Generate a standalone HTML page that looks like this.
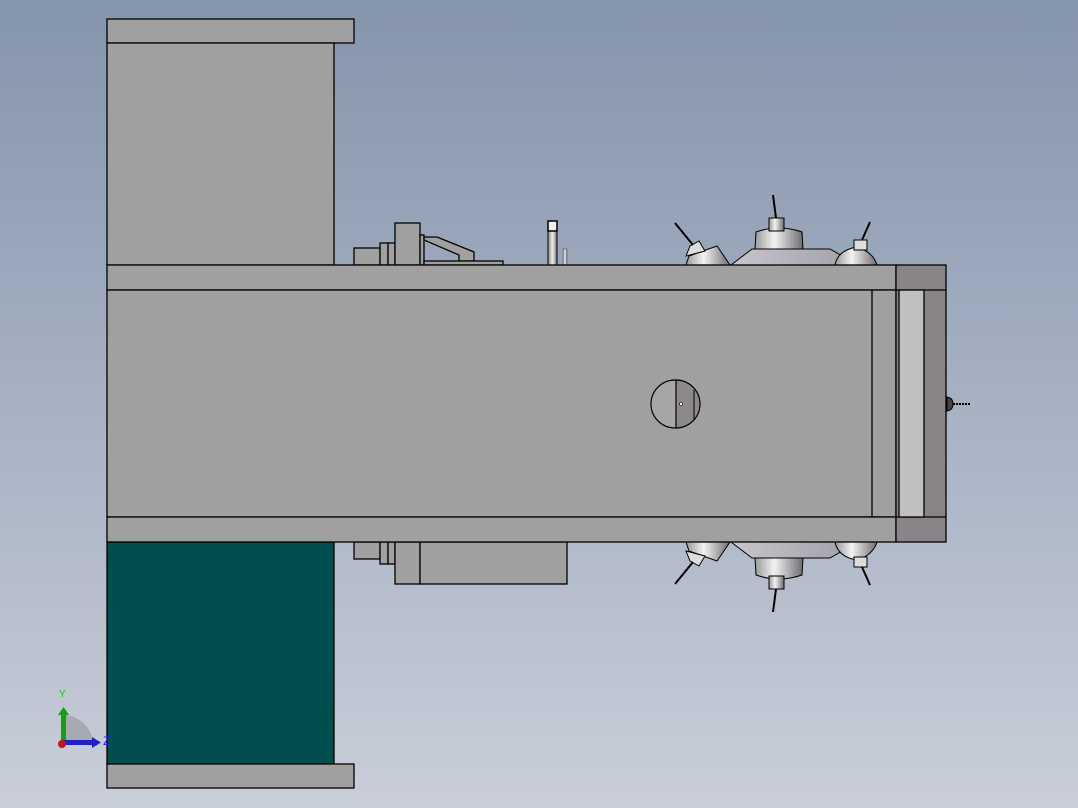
<!DOCTYPE html>
<html><head><style>
html,body{margin:0;padding:0;width:1078px;height:808px;overflow:hidden}
body{background:linear-gradient(#8595ac 0%,#a3aec0 45%,#c9ced9 100%)}
svg{position:absolute;left:0;top:0}
.g{fill:#a0a0a0;stroke:#000;stroke-width:1.3}
.d{fill:#888488;stroke:#000;stroke-width:1.3}
</style></head><body>
<svg width="1078" height="808" viewBox="0 0 1078 808">
<defs>
<linearGradient id="cup" x1="0" x2="1"><stop offset="0" stop-color="#9a9a9e"/><stop offset="0.4" stop-color="#f2f2f2"/><stop offset="1" stop-color="#6e6c72"/></linearGradient>
<linearGradient id="base" x1="0" x2="1"><stop offset="0" stop-color="#c8c6cc"/><stop offset="1" stop-color="#a09ea6"/></linearGradient>
<linearGradient id="pin" x1="0" x2="1"><stop offset="0" stop-color="#888"/><stop offset="0.5" stop-color="#eee"/><stop offset="1" stop-color="#777"/></linearGradient>
<g id="domes">
<path d="M731 265 L752 249 L830 249 L858 265 Z" fill="url(#base)" stroke="#000" stroke-width="1"/>
<path d="M755 249 L756 232 Q779 224 802 232 L803 249 Z" fill="url(#cup)" stroke="#000" stroke-width="1"/>
<rect x="769" y="218" width="15" height="13" fill="url(#cup)" stroke="#000" stroke-width="1"/>
<path d="M776 218 L773 195" stroke="#000" stroke-width="2"/>
<path d="M686 265 L689 256 L717 246 L730 265 Z" fill="url(#cup)" stroke="#000" stroke-width="1"/>
<path d="M686 256 L690 246 L699 241 L705 251 Z" fill="#ddd" stroke="#000" stroke-width="1"/>
<path d="M693 245 L675 223" stroke="#000" stroke-width="2"/>
<path d="M835 265 Q838 250 857 247 Q873 252 877 265 Z" fill="url(#cup)" stroke="#000" stroke-width="1"/>
<rect x="854" y="240" width="13" height="10" fill="#ddd" stroke="#000" stroke-width="1"/>
<path d="M862 240 L870 222" stroke="#000" stroke-width="2"/>
</g>
</defs>
<rect class="g" x="354" y="248" width="26" height="17"/>
<rect class="g" x="380" y="243" width="8" height="22"/>
<rect class="g" x="388" y="243" width="7" height="22"/>
<rect class="g" x="395" y="223" width="25" height="42"/>
<rect class="g" x="420" y="235" width="4" height="30"/>
<path class="g" d="M424 237 L437 237 L474 252 L474 261 L459 261 L459 255 L424 240 Z"/>
<rect class="g" x="424" y="261" width="79" height="4"/>
<rect x="548" y="221" width="9" height="44" fill="url(#pin)" stroke="#000" stroke-width="1"/>
<rect x="548" y="221" width="9" height="10" fill="#eee" stroke="#000" stroke-width="1.5"/>
<rect x="563" y="249" width="4" height="16" fill="url(#pin)" stroke="#555" stroke-width="0.6"/>
<use href="#domes"/>
<g transform="translate(0,807) scale(1,-1)"><use href="#domes"/></g>
<rect class="g" x="354" y="542" width="26" height="17"/>
<rect class="g" x="380" y="542" width="8" height="22"/>
<rect class="g" x="388" y="542" width="7" height="22"/>
<rect class="g" x="395" y="542" width="25" height="42"/>
<rect class="g" x="420" y="542" width="147" height="42"/>
<rect class="g" x="107" y="19" width="247" height="24"/>
<rect class="g" x="107" y="43" width="227" height="222"/>
<rect x="107" y="542" width="227" height="222" fill="#024d4e" stroke="#000" stroke-width="1.3"/>
<rect class="g" x="107" y="764" width="247" height="24"/>
<rect class="g" x="107" y="265" width="789" height="25"/>
<rect class="g" x="107" y="290" width="789" height="227"/>
<line x1="872" y1="290" x2="872" y2="517" stroke="#000" stroke-width="1.3"/>
<rect class="g" x="107" y="517" width="789" height="25"/>
<rect class="d" x="896" y="265" width="50" height="277"/>
<line x1="896" y1="290" x2="946" y2="290" stroke="#000" stroke-width="1.3"/>
<line x1="896" y1="517" x2="946" y2="517" stroke="#000" stroke-width="1.3"/>
<rect x="899" y="290" width="25" height="227" fill="#c0c0c0" stroke="#000" stroke-width="1.3"/>
<path d="M947 397 Q953 398 953 404 Q953 410 947 411 Z" fill="#444" stroke="#000"/>
<line x1="953" y1="404" x2="970" y2="404" stroke="#000" stroke-width="2" stroke-dasharray="2 1"/>
<circle cx="675" cy="404" r="24" fill="#a6a6a6" stroke="#000" stroke-width="1.2"/>
<path d="M676 380 A24 24 0 0 1 676 428 Z" fill="#8c888c" stroke="#000" stroke-width="1.2"/>
<path d="M694 390 L694 420" stroke="#000" stroke-width="1"/>
<circle cx="681" cy="404" r="1.5" fill="#fff" stroke="#000" stroke-width="0.6"/>
<path d="M63 745 L63 715 A30 30 0 0 1 93 745 Z" fill="#9fa2a8" opacity="0.8"/>
<rect x="61" y="713" width="5" height="32" fill="#1a9a1a"/>
<path d="M58 715 L63.5 707 L69 715 Z" fill="#1a9a1a"/>
<rect x="63" y="740" width="30" height="5" fill="#2020c8"/>
<path d="M92 737 L101 742.5 L92 748 Z" fill="#2020c8"/>
<circle cx="62" cy="744" r="4" fill="#c01818"/>
<text x="59" y="697" font-family="Liberation Sans,sans-serif" font-size="10" fill="#1c1">Y</text>
<text x="103" y="745" font-family="Liberation Sans,sans-serif" font-size="12" fill="#22e">Z</text>
</svg>
</body></html>
